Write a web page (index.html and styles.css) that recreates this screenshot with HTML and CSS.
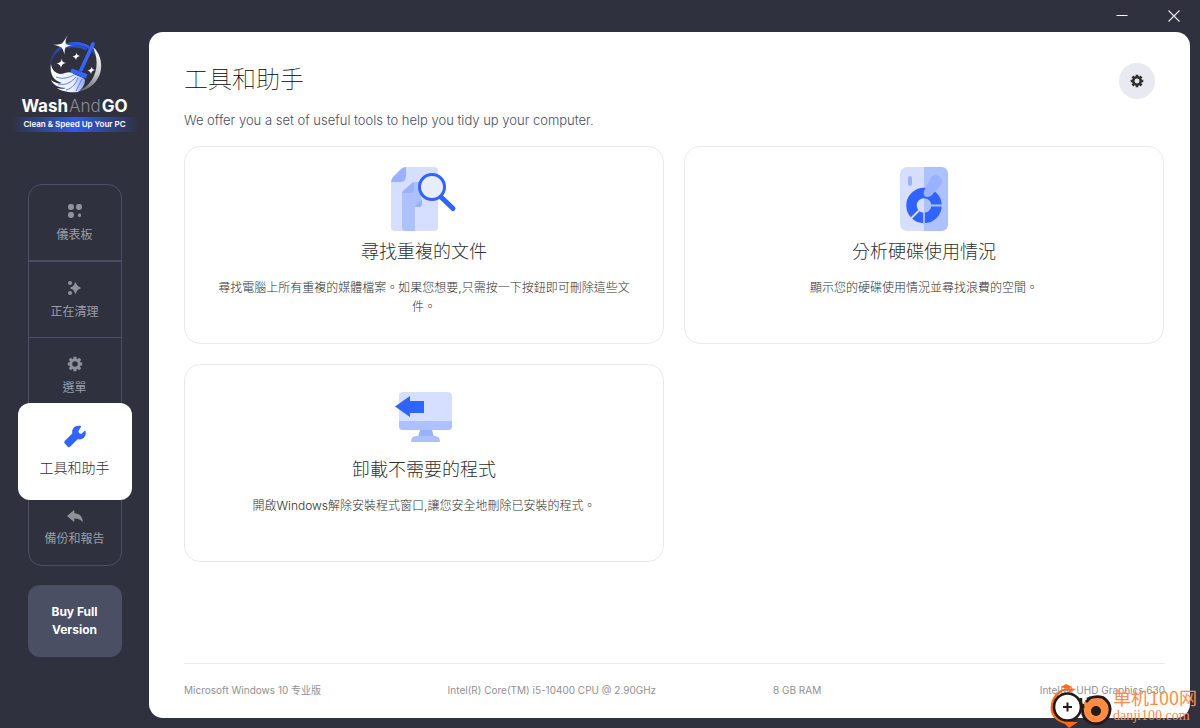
FILE: index.html
```html
<!DOCTYPE html>
<html lang="zh-Hant">
<head>
<meta charset="utf-8">
<meta name="viewport" content="width=device-width, initial-scale=1">
<title>WashAndGO</title>
<link rel="stylesheet" href="styles.css">
</head>
<body>
<svg class="defs" aria-hidden="true">
  <symbol id="gear" viewBox="0 0 16 16">
    <circle cx="8" cy="8" r="4.300" fill="none" stroke="currentColor" stroke-width="3"/>
    <path stroke="currentColor" stroke-width="3" d="M8 .8V4M8 12v3.200M.8 8H4M12 8h3.200M2.800 2.800 5 5M11 11l2.200 2.200M2.800 13.200 5 11M11 5l2.200-2.200"/>
  </symbol>
</svg>
<header class="titlebar">
  <button class="win-btn" aria-label="Minimize"><svg width="12" height="12" viewBox="0 0 12 12"><path d="M0.5 5.500H11.5" stroke="#fff" stroke-width="1"/></svg></button>
  <button class="win-btn" aria-label="Close"><svg width="12" height="12" viewBox="0 0 12 12"><path d="M.5.5l11 11M11.5.5l-11 11" stroke="#e4e5ea" stroke-width="1.2"/></svg></button>
</header>
<div class="app">
  <aside class="sidebar">
    <div class="logo">
      <svg class="logo-mark" width="58" height="60" viewBox="0 0 58 60" aria-hidden="true">
        <defs>
          <linearGradient id="ringBlue" x1="0" y1="1" x2="1" y2="0"><stop offset="0" stop-color="#2a4fc4" stop-opacity=".25"/><stop offset=".6" stop-color="#2c50c0"/><stop offset="1" stop-color="#3563ff"/></linearGradient>
          <linearGradient id="ringWhite" x1="0" y1="0" x2="0" y2="1"><stop offset="0" stop-color="#fff"/><stop offset=".6" stop-color="#c8c9cc"/><stop offset="1" stop-color="#5f616a"/></linearGradient>
          <linearGradient id="brush" x1="0" y1="0" x2="1" y2="0"><stop offset="0" stop-color="#fff"/><stop offset=".65" stop-color="#e9efff"/><stop offset="1" stop-color="#8ba6f5"/></linearGradient>
        </defs>
        <path fill="url(#ringBlue)" d="M4 31C4 17 15 7 29 7c6 0 11 1.500 15 4.500L42.500 14C38 11 34 10 29 10 17 10 7 18 4 31Z"/>
        <path fill="#2b50c2" d="M18 13Q29 7 41 13L40 15.500Q29 10 18 14Z"/>
        <path fill="url(#ringBlue)" d="M47 14q6 6 6 15-1-6-7-12Z"/>
        <path fill="url(#ringWhite)" d="M47 12c14 12 11 41-17 45 20-7 25-28 17-45Z"/>
        <path d="M47 9 35 35" stroke="#3563ff" stroke-width="3.600" stroke-linecap="round"/>
        <path fill="#3563ff" stroke="#3563ff" stroke-linejoin="round" d="M26 34 41 39.500 39.500 43 25 37Z"/>
        <path fill="url(#brush)" d="M5 28C5 34 9 38 14 39c5 0 8-3 12-1 4 3 12 4 13 7 0 5-3 9-7 12-9 1-17-1-21-4 3 1 7 1 9 0C13 53 7 50 5 45c4 3 8 4 11 3C9 46 3 41 5 28Z"/>
        <path d="M10 42c7 3 14 0 18-2M12 49c9 2 14-3 18-7M20 55c7-2 10-7 12-12M30 56l6-12" stroke="#5b80f4" stroke-width="1" fill="none"/>
        <path fill="#fff" d="M22-1Q18.500 6 20 9q2 1.500 8 1.500-7 .5-8.500 2-1 1.500-1 7-1.500-5.500-3-7Q13 11 7 9.500q6 .5 9-1Q18.500 6 22-1Z"/>
        <path fill="#fff" d="M16 23.500q-.5 4 4 4.500-4.500 .5-5 5-.5-4-4.500-4.500 4.500-.5 5.500-5ZM31 17.500q-.5 3 3 3.500-3.500 .5-4 4-.5-3-3.500-3.500 3.500-.5 4.500-4ZM46 31.500q-.5 3 3 3.500-3.500 .5-4 4-.5-3-3.500-3.500 3.500-.5 4.500-4Z"/>
      </svg>
      <div class="logo-name"><b>Wash</b><span>And</span><b>GO</b></div>
      <div class="logo-tag">Clean &amp; Speed Up Your PC</div>
    </div>
    <nav class="nav">
      <a class="nav-item" href="#dashboard">
        <svg width="16" height="16" viewBox="0 0 16 16" fill="currentColor"><rect x="1" y="1" width="6" height="6" rx="2.400"/><rect x="9" y="1" width="6" height="6" rx="2.400"/><rect x="1" y="9" width="6" height="6" rx="2.400"/><rect x="11" y="10.500" width="3" height="3.500" rx="1.300"/></svg>
        <span>儀表板</span></a>
      <a class="nav-item" href="#clean">
        <svg width="16" height="16" viewBox="0 0 16 16" fill="currentColor"><path d="M8.500 3q1 4 4.800 5-3.800 1-4.800 5Q7.500 9 3.700 8 7.500 7 8.500 3Z" stroke="currentColor" stroke-width="1.200" stroke-linejoin="round"/><circle cx="3" cy="3" r="2"/><circle cx="3" cy="13" r="2"/></svg>
        <span>正在清理</span></a>
      <a class="nav-item" href="#options">
        <svg width="16" height="16"><use href="#gear"/></svg>
        <span>選單</span></a>
      <a class="nav-item active" href="#tools" aria-current="page">
        <svg width="24" height="24" viewBox="0 0 24 24"><path d="M22.200 6.300 18.500 9.700q-3 .5-3-2.700L18.400 2.200C12.500.3 8.300 4.500 9.300 9.600L1.900 16.800q-1.400 1.400 0 2.800l2.600 2.900q1.400 1.300 2.800 0l7.300-7.200c5.500 1 9.600-3 7.600-9Z" fill="#3163ff"/></svg>
        <span>工具和助手</span></a>
      <a class="nav-item" href="#backup">
        <svg width="16" height="16" viewBox="0 0 16 16"><path fill="currentColor" d="M0 7 6.500 1.500q.8-.5.800.5v2.300c5.200.3 8 2.700 8.700 9q-3-4-8.700-3.800v2.400q0 1-.8.500Z"/></svg>
        <span>備份和報告</span></a>
    </nav>
    <button class="buy">Buy Full Version</button>
  </aside>
  <main class="panel">
    <div class="head">
      <h1>工具和助手</h1>
      <button class="settings" aria-label="Settings"><svg width="14" height="14"><use href="#gear"/></svg></button>
    </div>
    <p class="intro">We offer you a set of useful tools to help you tidy up your computer.</p>
    <section class="cards">
      <a class="card" href="#duplicates">
        <svg width="74" height="64" viewBox="0 0 74 64" aria-hidden="true">
          <path fill="#d6dfff" d="M18 0H47q4 0 4 4V60q0 4-4 4H8q-4 0-4-4V15Z"/>
          <path fill="#9ab1ff" d="M19 0V9q0 6-6 6H4Q4 12 6 10L14 2Q16 0 19 0Z"/>
          <path fill="#adc1ff" d="M28 15H34V40H28V64H19q-4 0-4-4V26Z"/>
          <path fill="#9ab1ff" d="M27 15V22q0 4-4 4H15q0-1 2-3l7-6q1-2 3-2ZM35 32V37q0 3-3 3H28q0-1 2-3Z"/>
          <path fill="#d6dfff" d="M28 40h7v24h-7Z"/>
          <path d="M54 30 66 41.500" stroke="#3163ff" stroke-width="5" stroke-linecap="round"/>
          <circle cx="45" cy="20" r="12.500" fill="#e8edff" stroke="#3163ff" stroke-width="3"/>
        </svg>
        <h2>尋找重複的文件</h2>
        <p>尋找電腦上所有重複的媒體檔案。如果您想要,只需按一下按鈕即可刪除這些文件。</p>
      </a>
      <a class="card" href="#disk">
        <svg width="48" height="64" viewBox="0 0 48 64" aria-hidden="true">
          <rect width="48" height="64" rx="7" fill="#d6dfff"/>
          <path fill="#adc1ff" d="M24 0H41q7 0 7 7V57q0 7-7 7H24Z"/>
          <rect x="8" y="9" width="4" height="10" rx="2" fill="#9ab1ff"/>
          <circle cx="24" cy="38.500" r="12.500" fill="none" stroke="#3163ff" stroke-width="10.500"/>
          <path d="M24 45V57M31 38.500H42" stroke="#adc1ff" stroke-width="1.800"/>
          <path d="M19 43.500 10.500 52" stroke="#d6dfff" stroke-width="1.800"/>
          <path fill="#9ab1ff" d="M24 24 30.500 11A6 6 0 0 1 41 18L31 29Q27 31 24.500 29 23 27 24 24Z"/>
        </svg>
        <h2>分析硬碟使用情況</h2>
        <p>顯示您的硬碟使用情況並尋找浪費的空間。</p>
      </a>
      <a class="card" href="#uninstall">
        <svg width="58" height="64" viewBox="0 0 58 64" aria-hidden="true">
          <rect x="4" y="7" width="53" height="38" rx="4" fill="#d6dfff"/>
          <path fill="#adc1ff" d="M4 36H57v5q0 4-4 4H8q-4 0-4-4Z"/>
          <path fill="#9ab1ff" d="M25 45H37L39 52H23Z"/>
          <path fill="#adc1ff" d="M21 51H40Q45 51 45 57H16Q16 51 21 51Z"/>
          <path fill="#3163ff" d="M0 21.500 15 11V16H29V28H15V32Z"/>
        </svg>
        <h2>卸載不需要的程式</h2>
        <p>開啟Windows解除安裝程式窗口,讓您安全地刪除已安裝的程式。</p>
      </a>
    </section>
    <footer class="specs">
      <span>Microsoft Windows 10 专业版</span>
      <span>Intel(R) Core(TM) i5-10400 CPU @ 2.90GHz</span>
      <span>8 GB RAM</span>
      <span>Intel(R) UHD Graphics 630</span>
    </footer>
  </main>
</div>
<div class="mark">
  <svg width="64" height="44" viewBox="0 0 64 44" aria-hidden="true">
    <path fill="#ff6a13" d="M27 5Q9 1 3 16-3 34 16 40L20 44 29 38Q8 39 6 23 6 7 20 6L19 9Q24 7 27 5ZM12 3 17 0 23 3 18 5Z"/>
    <circle cx="18.500" cy="23" r="13.500" fill="#fff" stroke="#221b1b" stroke-width="2.600"/>
    <path d="M18.500 18.500v9M14 23h9" stroke="#221b1b" stroke-width="2"/>
    <circle cx="47" cy="26" r="14" fill="#ff8c45"/>
    <path d="M34 20Q31 34 42 39 53 42 59 33 65 21 54 13.500 47 11 38 15M32 14Q31 21 35 24M42 13 37 18" fill="none" stroke="#221b1b" stroke-width="2.800"/>
    <circle cx="47" cy="27" r="5" fill="#221b1b"/>
  </svg>
  <div class="mark-text"><span class="mark-name">单机100网</span><span class="mark-url">danji100.com</span></div>
</div>
</body>
</html>
```
FILE: styles.css
```css
* { box-sizing: border-box; }
body {
  margin: 0;
  min-height: 100vh;
  display: flex;
  flex-direction: column;
  background: #2f323e;
  color: #303030;
  font-family: Inter, "Noto Sans CJK TC", sans-serif;
  font-size: 12px;
}
button { border: 0; padding: 0; font: inherit; cursor: pointer; }
a { color: inherit; text-decoration: none; }
svg { display: block; flex: none; }
h1, h2, p { margin: 0; }
.defs { position: absolute; width: 0; height: 0; }

.titlebar { display: flex; justify-content: flex-end; height: 32px; }
.win-btn {
  width: 52px;
  display: flex;
  align-items: center;
  justify-content: center;
  background: none;
}

.app { flex: 1; display: flex; padding: 0 10px 10px 0; }
.sidebar {
  width: 149px;
  display: flex;
  flex-direction: column;
  align-items: center;
  padding-top: 3px;
}
.logo {
  width: 126px;
  display: flex;
  flex-direction: column;
  align-items: center;
  color: #fff;
}
.logo-name {
  display: flex;
  gap: 1px;
  font: 17px/22px Inter, sans-serif;
}
.logo-name b { font-weight: 700; }
.logo-name span { color: #8b8b8f; font-weight: 300; }
.logo-tag {
  width: 100%;
  text-align: center;
  font-size: 8px;
  font-weight: 600;
  line-height: 15px;
  background: linear-gradient(90deg, rgba(49, 99, 255, 0), #2f5be8 50%, rgba(49, 99, 255, 0));
}

.nav {
  width: 94px;
  margin-top: 52px;
  border: 1px solid #4a4f65;
  border-radius: 14px;
}
.nav-item {
  height: 65px;
  display: flex;
  flex-direction: column;
  align-items: center;
  gap: 7px;
  color: #9a9da6;
  line-height: 18px;
}
.nav-item svg { color: #8f929b; }
.nav-item:nth-child(-n+3) { padding-top: 18px; }
.nav-item:nth-child(1) { height: 77px; border-bottom: 2px solid #4a4f65; }
.nav-item:nth-child(2) { height: 76px; border-bottom: 1px solid #4a4f65; }
.nav-item:last-child { padding-top: 9px; gap: 5px; }
.nav-item.active {
  height: 97px;
  margin: 0 -11px;
  padding-top: 21px;
  gap: 11px;
  border-radius: 12px;
  background: #fff;
  color: #303030;
  font-size: 14px;
  font-weight: 300;
}
.buy {
  width: 94px;
  height: 72px;
  margin-top: 19px;
  padding: 0 16px;
  border-radius: 12px;
  background: #4a4f63;
  color: #fff;
  font-weight: 700;
  line-height: 18px;
}

.panel {
  flex: 1;
  min-width: 0;
  display: flex;
  flex-direction: column;
  padding: 31px 26px 0 35px;
  border-radius: 14px;
  background: #fff;
}
.head {
  display: flex;
  align-items: flex-start;
  justify-content: space-between;
  padding-right: 9px;
}
h1 { font-size: 24px; line-height: 34px; font-weight: 100; color: #000; }
.settings {
  width: 36px;
  height: 36px;
  display: grid;
  place-items: center;
  border-radius: 50%;
  background: #e8eaf1;
  color: #303030;
}
.intro { margin-top: 11px; color: #4a4f63; font-size: 13px; line-height: 20px; font-weight: 300; }
.cards {
  display: grid;
  grid-template-columns: 1fr 1fr;
  grid-auto-rows: 198px;
  gap: 20px;
  margin-top: 16px;
}
.card {
  display: flex;
  flex-direction: column;
  align-items: center;
  padding: 20px 32px;
  border: 1px solid #e8eaf1;
  border-radius: 16px;
  text-align: center;
}
.card h2 { margin-top: 7px; font-size: 18px; line-height: 28px; font-weight: 300; }
.card p { margin-top: 12px; line-height: 19px; font-weight: 300; }
.specs {
  display: grid;
  grid-template-columns: repeat(4, 1fr);
  margin-top: auto;
  margin-right: -1px;
  padding: 17px 0 19px;
  border-top: 1px solid #e8eaf1;
  color: #919191;
  font-size: 10px;
  line-height: 18px;
  text-align: center;
  white-space: nowrap;
}
.specs span:first-child { text-align: left; }
.specs span:last-child { text-align: right; }

.mark {
  position: absolute;
  right: 3px;
  bottom: 0;
  display: flex;
  align-items: center;
  color: #ff8c45;
}
.mark-text { display: flex; flex-direction: column; }
.mark-name { font: 18px/20px "Noto Sans CJK SC", sans-serif; }
.mark-url { font: 14px/18px "Liberation Serif", serif; }
```
